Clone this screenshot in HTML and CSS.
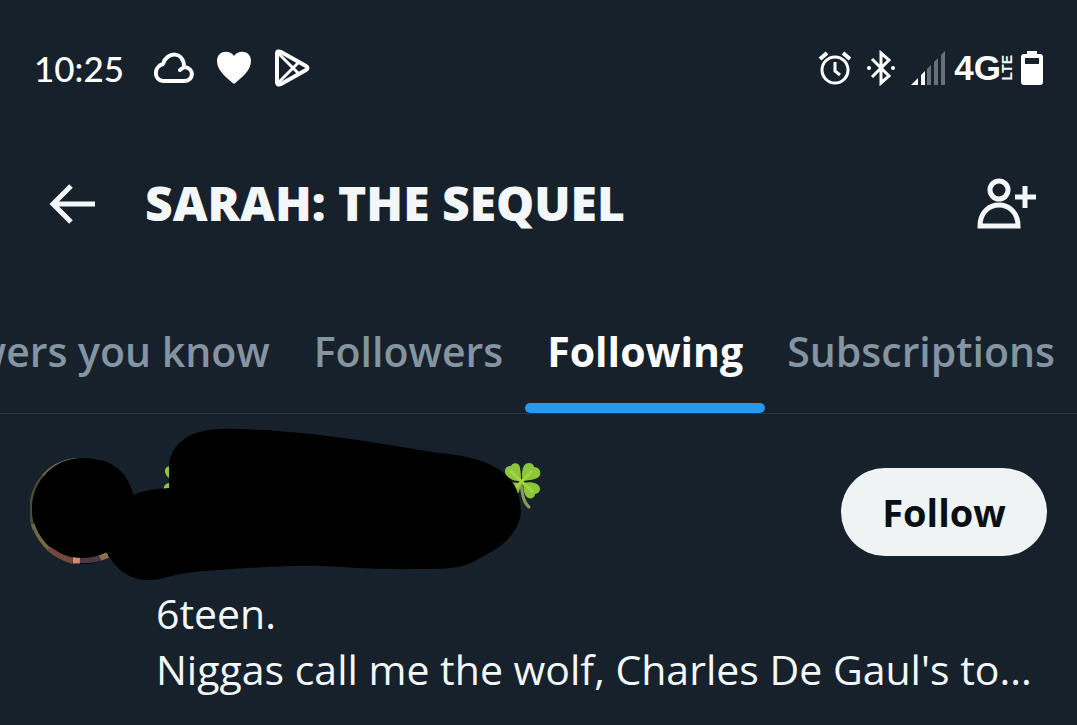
FILE: index.html
```html
<!DOCTYPE html>
<html lang="en">
<head>
    <meta charset="UTF-8">
    <meta name="viewport" content="width=device-width, initial-scale=1.0">
    <title>SARAH: THE SEQUEL</title>
    <link rel="stylesheet" href="styles.css">
</head>
<body>
    <svg class="defs" aria-hidden="true">
        <symbol id="clover" viewBox="0 0 40 48">
            <path d="M19 21 C20 30 21 40 27 45" fill="none" stroke="#8a9a55" stroke-width="3" stroke-linecap="round"/>
            <g fill="#8cc63a">
                <path d="M19 19 C10 20 2 14 3 8 C4 4 8 4 9 4 C10 0 18 0 18 6 C19 11 19 15 19 19Z"/>
                <path d="M21 19 C19 12 20 1 27 1 C31 1 32 4 32 5 C37 5 39 9 38 13 C36 18 27 18 21 19Z"/>
                <path d="M21 21 C29 19 38 21 38 27 C38 31 34 32 33 32 C33 37 26 38 24 34 C21 30 22 25 21 21Z"/>
                <path d="M19 21 C18 29 15 37 10 36 C6 36 6 32 6 31 C1 30 1 25 3 23 C7 19 13 21 19 21Z"/>
            </g>
            <path d="M8 9 L31 30 M30 9 L9 30" stroke="#a4d444" stroke-width="3"/>
        </symbol>
    </svg>

    <div class="status-bar">
        <div class="status-left">
            <span class="time">10:25</span>
            <svg width="40" height="36" viewBox="0 0 40 36" fill="none" stroke="#fff" stroke-width="4" stroke-linecap="round" stroke-linejoin="round">
                <path d="M9 31 H30 C40 31 41 18 30 17 C30 1 13 1 9 14 C-1 17 0 30 9 31Z M30 17 L26 20"/>
            </svg>
            <svg width="36" height="36" viewBox="0 0 36 36" fill="#fff">
                <path d="M18 34 C11 28 1 21 1 11 C1 1 13 -1 18 6 C23 -1 35 1 35 11 C35 21 25 28 18 34Z"/>
            </svg>
            <svg width="36" height="38" viewBox="0 0 36 38" fill="none" stroke="#fff" stroke-width="4" stroke-linejoin="round">
                <path d="M3 5 C3 2 5 2 7 3 L32 17 C34 18 34 20 32 21 L7 35 C5 36 3 36 3 33Z"/>
                <path d="M4 34 L25 13 M4 4 L25 25" stroke-width="3"/>
            </svg>
        </div>
        <div class="status-right">
            <svg width="34" height="36" viewBox="0 0 34 36" fill="none" stroke="#fff" stroke-width="3">
                <circle cx="17" cy="20" r="13"/>
                <path d="M17 12 V21 L22 25"/>
                <path d="M2 9 L9 3 M32 9 L25 3" stroke-width="4"/>
            </svg>
            <svg class="bluetooth" width="30" height="36" viewBox="0 0 30 36" fill="none" stroke="#fff" stroke-width="3">
                <path d="M6 9 L23 26 L15 33 V3 L23 10 L6 27"/>
                <circle cx="3" cy="18" r="2" fill="#fff" stroke="none"/>
                <circle cx="27" cy="18" r="2" fill="#fff" stroke="none"/>
            </svg>
            <svg width="36" height="36" viewBox="0 0 36 36">
                <path d="M1 35 L8 28 V35Z M11 25 L15 21 V35 H11Z" fill="#fff"/>
                <path d="M17 19 L21 15 V35 H17Z M24 12 L28 8 V35 H24Z M31 5 L35 1 V35 H31Z" fill="#66707a"/>
            </svg>
            <span class="network">4G<small>LTE</small></span>
            <svg width="22" height="36" viewBox="0 0 22 36">
                <path d="M6 1 H16 V4 H19 C21 4 22 5 22 7 V32 C22 34 21 35 19 35 H3 C1 35 0 34 0 32 V7 C0 5 1 4 3 4 H6Z" fill="#fff"/>
                <path d="M4 8 H18 V14 H4Z" fill="#17212b"/>
            </svg>
        </div>
    </div>

    <header class="header">
        <button class="icon-btn" aria-label="Back">
            <svg width="48" height="40" viewBox="0 0 48 40" fill="none" stroke="#f3f7f9" stroke-width="5">
                <path d="M47 20 H5 M23 2 L5 20 L23 38"/>
            </svg>
        </button>
        <h1>SARAH: THE SEQUEL</h1>
        <button class="icon-btn" aria-label="Find people">
            <svg width="60" height="52" viewBox="0 0 60 52" fill="none" stroke="#f3f7f9" stroke-width="5">
                <circle cx="23" cy="12" r="9"/>
                <path d="M4 48 C4 20 42 20 42 48Z M39 19 H60 M49 8 V30"/>
            </svg>
        </button>
    </header>

    <nav class="tabs">
        <a href="#">Followers you know</a>
        <a href="#">Followers</a>
        <a href="#" class="active">Following</a>
        <a href="#">Subscriptions</a>
    </nav>

    <main class="user">
        <svg class="avatar" viewBox="0 0 106 106">
            <circle cx="53" cy="53" r="53" fill="#000"/>
            <g fill="none" stroke-width="3">
                <path d="M56 1 C36 0 22 8 13 18" stroke="#66763e"/>
                <path d="M13 18 C1 32 -3 52 4 72" stroke="#4c4a35"/>
                <path d="M3 66 C8 80 14 87 20 92" stroke="#6d6a45" stroke-width="4"/>
                <path d="M19 90 C28 98 36 101 43 103" stroke="#75483b" stroke-width="6"/>
                <path d="M43 102 H50" stroke="#d08a78" stroke-width="7"/>
                <path d="M50 102 C60 103 66 101 70 100" stroke="#4d3845" stroke-width="6"/>
                <path d="M70 100 L78 97" stroke="#8b704b" stroke-width="6"/>
            </g>
        </svg>
        <div class="info">
            <div class="top-row">
                <div class="name">
                    <svg><use href="#clover"/></svg>
                    <svg><use href="#clover"/></svg>
                </div>
                <button class="follow-btn">Follow</button>
            </div>
            <p class="bio">6teen.<br>Niggas call me the wolf, Charles De Gaul's to...</p>
        </div>
        <svg class="scribble" width="560" height="180" viewBox="0 414 560 180" aria-hidden="true">
            <circle cx="82" cy="508" r="50"/>
            <path d="M100 460 C118 464 130 478 133 495 C145 490 155 489 169 488 V465 C171 444 190 429 222 429 C250 428 300 433 320 435 C370 441 400 447 440 453 C480 457 500 466 512 482 C520 491 522 510 520 518 C516 533 505 546 480 558 C465 568 450 569 420 569 C350 570 340 565 290 566 C240 568 220 570 195 572 C170 574 165 580 148 580 C130 580 116 570 108 554 L82 530Z"/>
        </svg>
    </main>
</body>
</html>
```
FILE: styles.css
```css
* {
    box-sizing: border-box;
}

body {
    margin: 0;
    background-color: #17212b;
    color: #f3f7f9;
    font-family: "Open Sans", sans-serif;
    overflow-x: hidden;
}

svg {
    display: block;
    flex-shrink: 0;
}

.defs {
    position: absolute;
    width: 0;
    height: 0;
}

button {
    border: none;
    padding: 0;
    background: none;
    font-family: inherit;
    cursor: pointer;
}

/* phone status bar */
.status-bar {
    display: flex;
    justify-content: space-between;
    align-items: center;
    height: 136px;
    padding: 0 34px;
    color: #fff;
}

.status-left {
    display: flex;
    align-items: center;
    gap: 22px;
}

.time {
    margin-right: 8px;
    font-family: Lato, sans-serif;
    font-size: 35px;
    font-weight: 500;
}

.status-right {
    display: flex;
    align-items: center;
    gap: 8px;
}

.bluetooth {
    margin: 0 6px;
}

.network {
    display: flex;
    align-items: center;
    font-family: "Liberation Sans", sans-serif;
    font-size: 35px;
    font-weight: bold;
}

.network small {
    writing-mode: vertical-rl;
    rotate: 180deg;
    font-size: 14px;
    line-height: 12px;
}

/* title row */
.header {
    display: flex;
    align-items: center;
    height: 136px;
    padding: 0 41px 0 48px;
}

.header h1 {
    flex: 1;
    margin: 0 0 4px 49px;
    font-size: 48px;
    font-weight: 800;
    white-space: nowrap;
}

/* tabs, scrolled to the end */
.tabs {
    display: flex;
    justify-content: flex-end;
    height: 142px;
    border-bottom: 1px solid #28333d;
    overflow: hidden;
}

.tabs a {
    position: relative;
    padding: 51px 22px 0;
    color: #8494a1;
    font-size: 41px;
    line-height: 56px;
    font-weight: 600;
    text-decoration: none;
    white-space: nowrap;
}

.tabs .active {
    color: #fff;
    font-weight: 700;
}

.tabs .active::after {
    content: "";
    position: absolute;
    left: 0;
    right: 0;
    bottom: 0;
    height: 10px;
    border-radius: 5px;
    background-color: #2699eb;
}

/* user row */
.user {
    position: relative;
    display: flex;
    padding: 44px 30px 24px;
}

.avatar {
    width: 106px;
    height: 106px;
}

.info {
    flex: 1;
    min-width: 0;
    margin-left: 20px;
}

.top-row {
    display: flex;
    justify-content: space-between;
    padding: 4px 0 0 6px;
}

.name {
    display: flex;
    justify-content: space-between;
    width: 380px;
}

.name svg {
    width: 40px;
    height: 48px;
}

.follow-btn {
    width: 206px;
    height: 88px;
    margin-top: 6px;
    border-radius: 44px;
    background-color: #eff3f4;
    color: #0b0f14;
    font-size: 38px;
    font-weight: 700;
}

.bio {
    margin: 29px 0 0;
    font-size: 41px;
    line-height: 56px;
    white-space: nowrap;
}

.scribble {
    position: absolute;
    top: 0;
    left: 0;
}
```
